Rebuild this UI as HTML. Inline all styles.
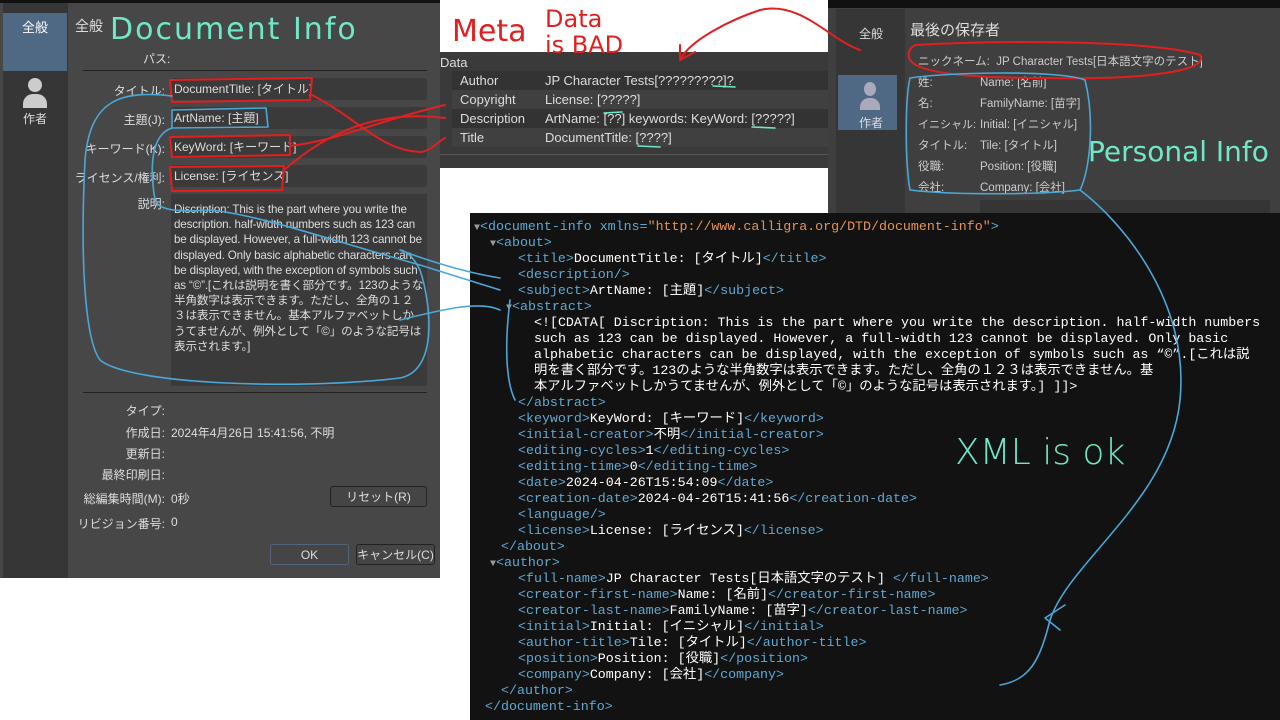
<!DOCTYPE html>
<html><head><meta charset="utf-8">
<style>
body{margin:0;width:1280px;height:720px;background:#fff;position:relative;overflow:hidden;font-family:"Liberation Sans","Noto Sans CJK JP",sans-serif;}
.a{position:absolute;white-space:nowrap}
#dlg{position:absolute;left:0;top:0;width:440px;height:578px;background:#474747;border-top:3px solid #111;box-sizing:border-box}
.lbl{position:absolute;right:275px;font-size:12px;color:#ddd;white-space:nowrap}
.fld{position:absolute;left:171px;width:256px;height:22px;background:#3a3a3a;border-radius:3px;color:#ddd;font-size:12px;line-height:22px;padding-left:3px;box-sizing:border-box}
.btn{position:absolute;height:21px;background:#454545;border:1px solid #222;border-radius:3px;color:#ddd;font-size:12px;line-height:21px;text-align:center;box-sizing:border-box}
#data{position:absolute;left:440px;top:52px;width:388px;height:116px;background:#3a3a3a;color:#ddd;font-size:13px}
.row{position:absolute;left:12px;width:376px;height:19px;line-height:19px}
.row span{position:absolute}
#rp{position:absolute;left:828px;top:0;width:452px;height:213px;background:#3f3f3f;border-top:8px solid #111;box-sizing:border-box;color:#ccc;font-size:11.5px}
#xml{position:absolute;left:470px;top:213px;width:810px;height:507px;background:#121212;font-family:"Liberation Mono","Noto Sans CJK JP",monospace;font-size:13.3px;color:#fff}
.x{position:absolute;white-space:pre;line-height:16px}
.t{color:#5fa8d3}.s{color:#e8915a}
.tri{color:#999;font-size:10px}
</style></head><body>

<div id="dlg">
 <div class="a" style="left:3px;top:0;width:65px;height:575px;background:#363636"></div>
 <div class="a" style="left:3px;top:10px;width:64px;height:58px;background:#4f6985;color:#fff;font-size:13px;text-align:center;line-height:30px">全般</div>
 <div class="a" style="left:28px;top:75px;width:14px;height:14px;border-radius:50%;background:#ccc"></div>
 <div class="a" style="left:23px;top:91px;width:24px;height:14px;border-radius:10px 10px 0 0;background:#ccc"></div>
 <div class="a" style="left:23px;top:107px;color:#ddd;font-size:12px">作者</div>
 <div class="a" style="left:75px;top:13px;color:#ddd;font-size:14px">全般</div>
 <div class="a" style="left:143px;top:47px;color:#ddd;font-size:12px">パス:</div>
 <div class="a" style="left:83px;top:67px;width:344px;height:1px;background:#222"></div>
 <div class="lbl" style="top:79px">タイトル:</div><div class="fld" style="top:75px">DocumentTitle: [タイトル]</div>
 <div class="lbl" style="top:108px">主題(J):</div><div class="fld" style="top:104px">ArtName: [主題]</div>
 <div class="lbl" style="top:137px">キーワード(K):</div><div class="fld" style="top:133px">KeyWord: [キーワード]</div>
 <div class="lbl" style="top:166px">ライセンス/権利:</div><div class="fld" style="top:162px">License: [ライセンス]</div>
 <div class="lbl" style="top:192px">説明:</div>
 <div class="a" style="left:171px;top:191px;width:256px;height:192px;background:#3a3a3a;color:#ddd;font-size:11.6px;letter-spacing:-0.15px;line-height:15.2px;white-space:normal;padding:8px 3px;box-sizing:border-box">Discription: This is the part where you write the description. half-width numbers such as 123 can be displayed. However, a full-width 123 cannot be displayed. Only basic alphabetic characters can be displayed, with the exception of symbols such as “©”.[これは説明を書く部分です。123のような半角数字は表示できます。ただし、全角の１２３は表示できません。基本アルファベットしかうてませんが、例外として「©」のような記号は表示されます。]</div>
 <div class="a" style="left:83px;top:389px;width:344px;height:1px;background:#222"></div>
 <div class="lbl" style="top:399px">タイプ:</div>
 <div class="lbl" style="top:421px">作成日:</div><div class="a" style="left:171px;top:421px;color:#ddd;font-size:12px">2024年4月26日 15:41:56, 不明</div>
 <div class="lbl" style="top:442px">更新日:</div>
 <div class="lbl" style="top:463px">最終印刷日:</div>
 <div class="lbl" style="top:487px">総編集時間(M):</div><div class="a" style="left:171px;top:487px;color:#ddd;font-size:12px">0秒</div>
 <div class="btn" style="left:330px;top:483px;width:97px">リセット(R)</div>
 <div class="lbl" style="top:512px">リビジョン番号:</div><div class="a" style="left:171px;top:512px;color:#ddd;font-size:12px">0</div>
 <div class="btn" style="left:270px;top:541px;width:79px;border-color:#52647a">OK</div>
 <div class="btn" style="left:356px;top:541px;width:79px">キャンセル(C)</div>
</div>

<div id="data">
 <div class="a" style="left:0;top:3px">Data</div>
 <div class="row" style="top:19px;background:#333"><span style="left:8px">Author</span><span style="left:93px">JP Character Tests[?????????]?</span></div>
 <div class="row" style="top:38px;background:#404040"><span style="left:8px">Copyright</span><span style="left:93px">License: [?????]</span></div>
 <div class="row" style="top:57px;background:#333"><span style="left:8px">Description</span><span style="left:93px">ArtName: [??] keywords: KeyWord: [?????]</span></div>
 <div class="row" style="top:76px;background:#404040"><span style="left:8px">Title</span><span style="left:93px">DocumentTitle: [????]</span></div>
 <div class="a" style="left:0;top:102px;width:388px;height:1px;background:#555"></div>
</div>

<div id="rp">
 <div class="a" style="left:8px;top:1px;width:69px;height:204px;background:#363636"></div>
 <div class="a" style="left:31px;top:17px;color:#ddd;font-size:12px">全般</div>
 <div class="a" style="left:10px;top:67px;width:59px;height:55px;background:#4f6985"></div>
 <div class="a" style="left:36px;top:74px;width:12px;height:14px;border-radius:50%;background:#aab"></div>
 <div class="a" style="left:32px;top:90px;width:20px;height:12px;border-radius:9px 9px 0 0;background:#aab"></div>
 <div class="a" style="left:31px;top:106px;color:#ddd;font-size:12px">作者</div>
 <div class="a" style="left:82px;top:11px;font-size:15px;color:#ddd">最後の保存者</div>
 <div class="a" style="left:90px;top:45px">ニックネーム:&nbsp; JP Character Tests[日本語文字のテスト]</div>
 <div class="a" style="left:90px;top:66px">姓:</div><div class="a" style="left:152px;top:66px">Name: [名前]</div>
 <div class="a" style="left:90px;top:87px">名:</div><div class="a" style="left:152px;top:87px">FamilyName: [苗字]</div>
 <div class="a" style="left:90px;top:108px;font-size:11px">イニシャル:</div><div class="a" style="left:152px;top:108px">Initial: [イニシャル]</div>
 <div class="a" style="left:90px;top:129px">タイトル:</div><div class="a" style="left:152px;top:129px">Tile: [タイトル]</div>
 <div class="a" style="left:90px;top:150px">役職:</div><div class="a" style="left:152px;top:150px">Position: [役職]</div>
 <div class="a" style="left:90px;top:171px">会社:</div><div class="a" style="left:152px;top:171px">Company: [会社]</div>
 <div class="a" style="left:152px;top:192px;width:290px;height:13px;background:#353535"></div>
</div>

<div id="xml">
<div class="x" style="left:4px;top:6px"><span class="tri">▼</span><span class="t">&lt;document-info xmlns=</span><span class="s">"http://www.calligra.org/DTD/document-info"</span><span class="t">&gt;</span></div>
<div class="x" style="left:20px;top:22px"><span class="tri">▼</span><span class="t">&lt;about&gt;</span></div>
<div class="x" style="left:48px;top:38px"><span class="t">&lt;title&gt;</span>DocumentTitle: [タイトル]<span class="t">&lt;/title&gt;</span></div>
<div class="x" style="left:48px;top:54px"><span class="t">&lt;description/&gt;</span></div>
<div class="x" style="left:48px;top:70px"><span class="t">&lt;subject&gt;</span>ArtName: [主題]<span class="t">&lt;/subject&gt;</span></div>
<div class="x" style="left:36px;top:86px"><span class="tri">▼</span><span class="t">&lt;abstract&gt;</span></div>
<div class="x" style="left:64px;top:102px">&lt;![CDATA[ Discription: This is the part where you write the description. half-width numbers
such as 123 can be displayed. However, a full-width 123 cannot be displayed. Only basic
alphabetic characters can be displayed, with the exception of symbols such as “©”.[これは説
明を書く部分です。123のような半角数字は表示できます。ただし、全角の１２３は表示できません。基
本アルファベットしかうてませんが、例外として「©」のような記号は表示されます。] ]]&gt;</div>
<div class="x" style="left:48px;top:182px"><span class="t">&lt;/abstract&gt;</span></div>
<div class="x" style="left:48px;top:198px"><span class="t">&lt;keyword&gt;</span>KeyWord: [キーワード]<span class="t">&lt;/keyword&gt;</span></div>
<div class="x" style="left:48px;top:214px"><span class="t">&lt;initial-creator&gt;</span>不明<span class="t">&lt;/initial-creator&gt;</span></div>
<div class="x" style="left:48px;top:230px"><span class="t">&lt;editing-cycles&gt;</span>1<span class="t">&lt;/editing-cycles&gt;</span></div>
<div class="x" style="left:48px;top:246px"><span class="t">&lt;editing-time&gt;</span>0<span class="t">&lt;/editing-time&gt;</span></div>
<div class="x" style="left:48px;top:262px"><span class="t">&lt;date&gt;</span>2024-04-26T15:54:09<span class="t">&lt;/date&gt;</span></div>
<div class="x" style="left:48px;top:278px"><span class="t">&lt;creation-date&gt;</span>2024-04-26T15:41:56<span class="t">&lt;/creation-date&gt;</span></div>
<div class="x" style="left:48px;top:294px"><span class="t">&lt;language/&gt;</span></div>
<div class="x" style="left:48px;top:310px"><span class="t">&lt;license&gt;</span>License: [ライセンス]<span class="t">&lt;/license&gt;</span></div>
<div class="x" style="left:31px;top:326px"><span class="t">&lt;/about&gt;</span></div>
<div class="x" style="left:20px;top:342px"><span class="tri">▼</span><span class="t">&lt;author&gt;</span></div>
<div class="x" style="left:48px;top:358px"><span class="t">&lt;full-name&gt;</span>JP Character Tests[日本語文字のテスト] <span class="t">&lt;/full-name&gt;</span></div>
<div class="x" style="left:48px;top:374px"><span class="t">&lt;creator-first-name&gt;</span>Name: [名前]<span class="t">&lt;/creator-first-name&gt;</span></div>
<div class="x" style="left:48px;top:390px"><span class="t">&lt;creator-last-name&gt;</span>FamilyName: [苗字]<span class="t">&lt;/creator-last-name&gt;</span></div>
<div class="x" style="left:48px;top:406px"><span class="t">&lt;initial&gt;</span>Initial: [イニシャル]<span class="t">&lt;/initial&gt;</span></div>
<div class="x" style="left:48px;top:422px"><span class="t">&lt;author-title&gt;</span>Tile: [タイトル]<span class="t">&lt;/author-title&gt;</span></div>
<div class="x" style="left:48px;top:438px"><span class="t">&lt;position&gt;</span>Position: [役職]<span class="t">&lt;/position&gt;</span></div>
<div class="x" style="left:48px;top:454px"><span class="t">&lt;company&gt;</span>Company: [会社]<span class="t">&lt;/company&gt;</span></div>
<div class="x" style="left:31px;top:470px"><span class="t">&lt;/author&gt;</span></div>
<div class="x" style="left:15px;top:486px"><span class="t">&lt;/document-info&gt;</span></div>
</div>

<svg class="a" style="left:0;top:0" width="1280" height="720" fill="none" stroke-linecap="round" stroke-linejoin="round">
 <g stroke="#e02020" stroke-width="2">
  <path d="M170 80 L312 78 L310 100 L172 102 Z"/>
  <path d="M170 137 L290 135 L290 155 L172 157 Z"/>
  <path d="M170 167 L284 166 L282 190 L172 191 Z"/>
  <path d="M312 95 C360 120 380 150 420 152 C430 152 440 140 445 138"/>
  <path d="M290 146 C340 140 380 120 445 105"/>
  <path d="M284 170 C330 130 380 110 445 118"/>
  <path d="M680 60 C690 40 730 20 760 10 C800 0 830 40 860 50"/>
  <path d="M680 60 L680 45 M680 60 L695 52"/>
  <path d="M915 45 C1000 40 1150 40 1200 55 C1210 70 1150 80 1050 78 C980 78 920 75 910 60 C905 50 915 45 915 45"/>
 </g>
 <g stroke="#4aa8d8" stroke-width="1.6">
  <path d="M172 110 L266 108 L268 127 L172 128 Z"/>
  <path d="M172 96 C120 90 90 100 85 160 C80 260 85 340 100 360 C130 385 300 390 400 378 C440 370 430 300 420 270 C410 250 400 250 400 250 C400 250 450 270 500 278"/>
  <path d="M172 128 C150 135 150 170 155 200 C160 215 200 210 210 210 C260 215 330 240 420 265 L500 290"/>
  <path d="M400 320 C440 310 480 300 500 310"/>
  <path d="M910 78 C950 72 1060 70 1085 80 C1095 120 1090 170 1080 190 C1040 195 950 195 910 190 C905 160 905 100 910 78"/>
  <path d="M1080 190 C1120 220 1190 300 1180 400 C1170 500 1070 560 1050 620 C1040 660 1030 680 1000 685"/>
  <path d="M1045 618 L1065 605 M1045 618 L1060 630"/>
  <path d="M510 300 C505 340 505 380 515 400"/>
 </g>
 <g stroke="#6fe8c8" stroke-width="1.6">
  <path d="M713 86 L735 87 M604 113 L622 112 M752 127 L775 128 M638 146 L660 147"/>
 </g>
</svg>
<div class="a" style="left:110px;top:12px;font-size:30px;color:#6fe8c8;font-family:'DejaVu Sans',sans-serif;letter-spacing:2px">Document Info</div>
<div class="a" style="left:452px;top:14px;font-size:30px;color:#e02020;font-family:'DejaVu Sans',sans-serif">Meta</div>
<div class="a" style="left:545px;top:6px;font-size:24px;color:#e02020;font-family:'DejaVu Sans',sans-serif;line-height:26px">Data<br>is BAD</div>
<div class="a" style="left:1088px;top:135px;font-size:28px;color:#6fe8c8;font-family:'DejaVu Sans',sans-serif">Personal Info</div>
<div class="a" style="left:955px;top:432px;font-size:36px;color:#6fe8c8;font-family:'DejaVu Sans',sans-serif;font-weight:200">XML is ok</div>
</body></html>
